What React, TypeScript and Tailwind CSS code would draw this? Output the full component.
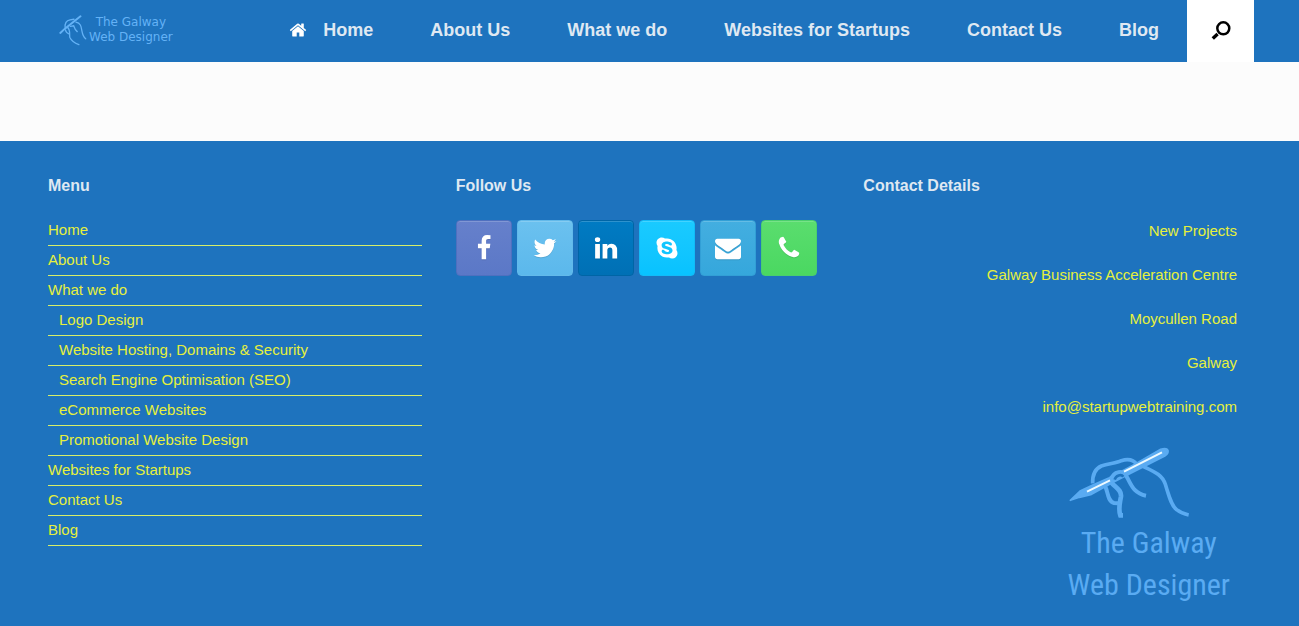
import { FaSkype } from "react-icons/fa";

const paths = {
  home: "M1472 992v480q0 26-19 45t-45 19h-384v-384h-256v384h-384q-26 0-45-19t-19-45v-480q0-1 .5-3t.5-3l575-474 575 474q1 2 1 6zm223-69l-62 74q-8 9-21 11h-3q-13 0-21-7l-692-577-692 577q-12 8-24 7-13-2-21-11l-62-74q-8-10-7-23.5t11-21.5l719-599q32-26 76-26t76 26l244 204v-195q0-14 9-23t23-9h192q14 0 23 9t9 23v408l219 182q10 8 11 21.5t-7 23.5z",
  facebook: "M1343 12v264h-157q-86 0-116 36t-30 108v189h293l-39 296h-254v759h-306v-759h-255v-296h255v-218q0-186 104-288.5t277-102.5q147 0 228 12z",
  twitter: "M1684 408q-67 98-162 167 1 14 1 42 0 130-38 259.5t-115.5 248.5-184.5 210.5-258 146-323 54.5q-271 0-496-145 35 4 78 4 225 0 401-138-105-2-188-64.5t-114-159.5q33 5 61 5 43 0 85-11-112-23-185.5-111.5t-73.5-205.5v-4q68 38 146 41-66-44-105-115t-39-154q0-88 44-163 121 149 294.5 238.5t371.5 99.5q-8-38-8-74 0-134 94.5-228.5t228.5-94.5q140 0 236 102 109-21 205-78-37 115-142 178 93-10 186-50z",
  linkedin: "M477 625v991h-330v-991h330zm21-306q1 73-50.5 122t-135.5 49h-2q-82 0-132-49t-50-122q0-74 51.5-122.5t134.5-48.5 133 48.5 51 122.5zm1166 729v568h-329v-530q0-105-40.5-164.5t-126.5-59.5q-63 0-105.5 34.5t-63.5 85.5q-11 30-11 81v553h-329q2-399 2-647t-1-296l-1-48h329v144h-2q20-32 41-56t56.5-52 87-43.5 114.5-15.5q171 0 275 113.5t104 332.5z",
  envelope: "M1792 710v794q0 66-47 113t-113 47h-1472q-66 0-113-47t-47-113v-794q44 49 101 87 362 246 497 345 57 42 92.5 65.5t94.5 48 110 24.5h2q51 0 110-24.5t94.5-48 92.5-65.5q170-123 498-345 57-39 100-87zm0-294q0 79-49 151t-122 123q-376 261-468 325-10 7-42.5 31t-54 38.5-52 32.5-57.5 27-50 9h-2q-23 0-50-9t-57.5-27-52-32.5-54-38.5-42.5-31q-91-64-262-182.5t-205-142.5q-62-42-117-115.5t-55-136.5q0-78 41.5-130t118.5-52h1472q65 0 112.5 47t47.5 113z",
  phone: "M1600 1240q0 27-10 70.5t-21 68.5q-21 50-122 106-94 51-186 51-27 0-53-3.5t-57.5-12.5-47-14.5-55.5-20.5-49-18q-98-35-175-83-127-79-264-216t-216-264q-48-77-83-175-3-9-18-49t-20.5-55.5-14.5-47-12.5-57.5-3.5-53q0-92 51-186 56-101 106-122 25-11 68.5-21t70.5-10q14 0 21 3 18 6 53 76 11 19 30 54t35 63.5 31 53.5q3 4 17.5 25t21.5 35.5 7 28.5q0 20-28.5 50t-62 55-62 53-28.5 46q0 9 5 22.5t8.5 20.5 14 24 11.5 19q76 137 174 235t235 174q2 1 19 11.5t24 14 20.5 8.5 22.5 5q18 0 46-28.5t53-62 55-62 50-28.5q14 0 28.5 7t35.5 21.5 25 17.5q25 15 53.5 31t63.5 35 54 30q70 35 76 53 3 7 3 21z",
};

function Icon({ name, className }: { name: keyof typeof paths; className: string }) {
  return (
    <svg viewBox="0 0 1792 1792" fill="currentColor" aria-hidden="true" className={className}>
      <path d={paths[name]} />
    </svg>
  );
}

function HeaderHand() {
  return (
    <svg viewBox="56 40 86 96" fill="none" stroke="currentColor" strokeLinecap="round" aria-hidden="true" className="h-8 w-7">
      <path d="M60 97 75 83 122 46" strokeWidth="6" />
      <path d="M75 81C73 65 80 59 90 57L102 55" strokeWidth="4" />
      <path d="M76 88C77 96 83 99 88 101M82 80C91 86 88 99 89 110C94 121 104 128 117 133M91 77 101 75C104 84 108 90 112 93M108 64C123 67 124 77 126 89C128 100 131 110 138 115" strokeWidth="4" />
    </svg>
  );
}

function FooterHand() {
  return (
    <svg viewBox="50 36 369 216" fill="none" stroke="#5aabf2" aria-hidden="true" className="h-[72px] w-[123px]">
      <path d="M57 199 86 171 126 152 174 131 252 90 328 46Q346 40 350 49Q352 58 342 65L222 126 180 148 118 182 84 190Z" fill="#5aabf2" strokeWidth="5" strokeLinejoin="round" />
      <path d="M124 148C123 121 132 104 150 96C174 88 196 88 210 80C230 74 246 76 257 92" strokeWidth="11" />
      <path d="M157 151C171 162 165 201 188 207L200 208" strokeWidth="12" />
      <path d="M180 145C190 160 211 166 209 187C205 211 200 225 207 244L215 244" strokeWidth="14" />
      <path d="M176 141C187 109 217 106 227 130C239 150 246 178 284 185" strokeWidth="12" />
      <path d="M190 137C193 124 210 119 216 128" stroke="#1e73be" strokeWidth="8" />
      <path d="M275 97C306 112 333 121 342 151C353 186 360 216 376 227C390 238 397 240 412 243" strokeWidth="11" />
      <path d="M107 173 176 139M218 113 332 55" stroke="#eefaff" strokeWidth="6" />
    </svg>
  );
}

const nav = ["Home", "About Us", "What we do", "Websites for Startups", "Contact Us", "Blog"];

const menu = [
  { label: "Home" },
  { label: "About Us" },
  { label: "What we do" },
  { label: "Logo Design", sub: true },
  { label: "Website Hosting, Domains & Security", sub: true },
  { label: "Search Engine Optimisation (SEO)", sub: true },
  { label: "eCommerce Websites", sub: true },
  { label: "Promotional Website Design", sub: true },
  { label: "Websites for Startups" },
  { label: "Contact Us" },
  { label: "Blog" },
];

const social: { label: string; icon: keyof typeof paths | "skype"; tile: string }[] = [
  { label: "Facebook", icon: "facebook", tile: "from-[#6680cb] to-[#5b78c7] border-[#4f70bf]" },
  { label: "Twitter", icon: "twitter", tile: "from-[#6bc1ef] to-[#5bb8ec] border-[#62b9ea]" },
  { label: "LinkedIn", icon: "linkedin", tile: "from-[#007bc3] to-[#0070b5] border-[#0065a6]" },
  { label: "Skype", icon: "skype", tile: "from-[#1acaff] to-[#08c2ff] border-[#12bbf7]" },
  { label: "Email", icon: "envelope", tile: "from-[#43aee0] to-[#35a7dc] border-[#329fd6]" },
  { label: "Phone", icon: "phone", tile: "from-[#5add6e] to-[#4ad861] border-[#4bcf6c]" },
];

const address = ["New Projects", "Galway Business Acceleration Centre", "Moycullen Road", "Galway"];

export default function App() {
  return (
    <div className="flex min-h-screen flex-col bg-[#fcfcfc] font-['Liberation_Sans',Arial,sans-serif]">
      <header className="flex h-[62px] items-stretch justify-between bg-[#1e73be] pr-[45px] pl-[59px]">
        <a href="#" className="flex items-center gap-0.5 pb-0.5 text-[#64b2f6]">
          <HeaderHand />
          <span className="flex flex-col text-center font-['DejaVu_Sans',sans-serif] text-[12px] leading-[15px]">
            <span>The Galway</span>
            <span>Web Designer</span>
          </span>
        </a>
        <div className="flex">
          <nav className="flex items-center gap-px pb-0.5 text-lg font-bold text-[#dfe8f2]">
            {nav.map((label) => (
              <a key={label} href="#" className="flex items-center px-7 whitespace-nowrap">
                {label === "Home" && <Icon name="home" className="mr-4 size-[18px] text-white" />}
                {label}
              </a>
            ))}
          </nav>
          <button type="button" aria-label="Search" className="flex w-[67px] items-center justify-center bg-white text-black">
            <svg viewBox="0 0 20 20" fill="none" stroke="currentColor" aria-hidden="true" className="size-5">
              <circle cx="12.3" cy="7.3" r="6" strokeWidth="2.5" />
              <path d="m6.6 13-4.8 4.4" strokeWidth="3.4" />
            </svg>
          </button>
        </div>
      </header>

      <main className="h-[79px]" />

      <footer className="grid flex-1 grid-cols-3 gap-x-[34px] bg-[#1e73be] pt-[33px] pr-[62px] pl-12 text-[15px] text-[#e6f03c]">
        <section>
          <h2 className="text-base leading-6 font-bold text-[#dfe8f2]">Menu</h2>
          <ul className="mt-[18px]">
            {menu.map(({ label, sub }) => (
              <li key={label} className={sub ? "h-[30px] border-b border-[#d8ee68] pl-[11px] leading-7" : "h-[30px] border-b border-[#d8ee68] leading-7"}>
                <a href="#">{label}</a>
              </li>
            ))}
          </ul>
        </section>

        <section>
          <h2 className="text-base leading-6 font-bold text-[#dfe8f2]">Follow Us</h2>
          <div className="mt-[22px] flex flex-wrap gap-[5px]">
            {social.map(({ label, icon, tile }) => (
              <a
                key={label}
                href="#"
                aria-label={label}
                className={`flex size-14 items-center justify-center rounded border bg-linear-to-b text-white shadow-[inset_0_1px_0_rgba(255,255,255,0.18)] ${tile}`}
              >
                {icon === "skype" ? (
                  <FaSkype className="size-6" />
                ) : (
                  <Icon name={icon} className="size-[26px] drop-shadow-[0_1px_0_rgba(0,0,0,0.1)]" />
                )}
              </a>
            ))}
          </div>
        </section>

        <section>
          <h2 className="text-base leading-6 font-bold text-[#dfe8f2]">Contact Details</h2>
          <address className="mt-[22px] flex flex-col items-end gap-[22px] leading-[22px] not-italic">
            {address.map((line) => (
              <span key={line}>{line}</span>
            ))}
            <a href="#">info@startupwebtraining.com</a>
          </address>
          <div className="mt-7 flex justify-end pr-[7px]">
            <div className="text-[#5aabf2]">
              <FooterHand />
              <p className="mt-1 text-center font-['Roboto_Condensed',Roboto,sans-serif] text-[30px] leading-[42px]">
                The Galway
                <br />
                Web Designer
              </p>
            </div>
          </div>
        </section>
      </footer>
    </div>
  );
}
